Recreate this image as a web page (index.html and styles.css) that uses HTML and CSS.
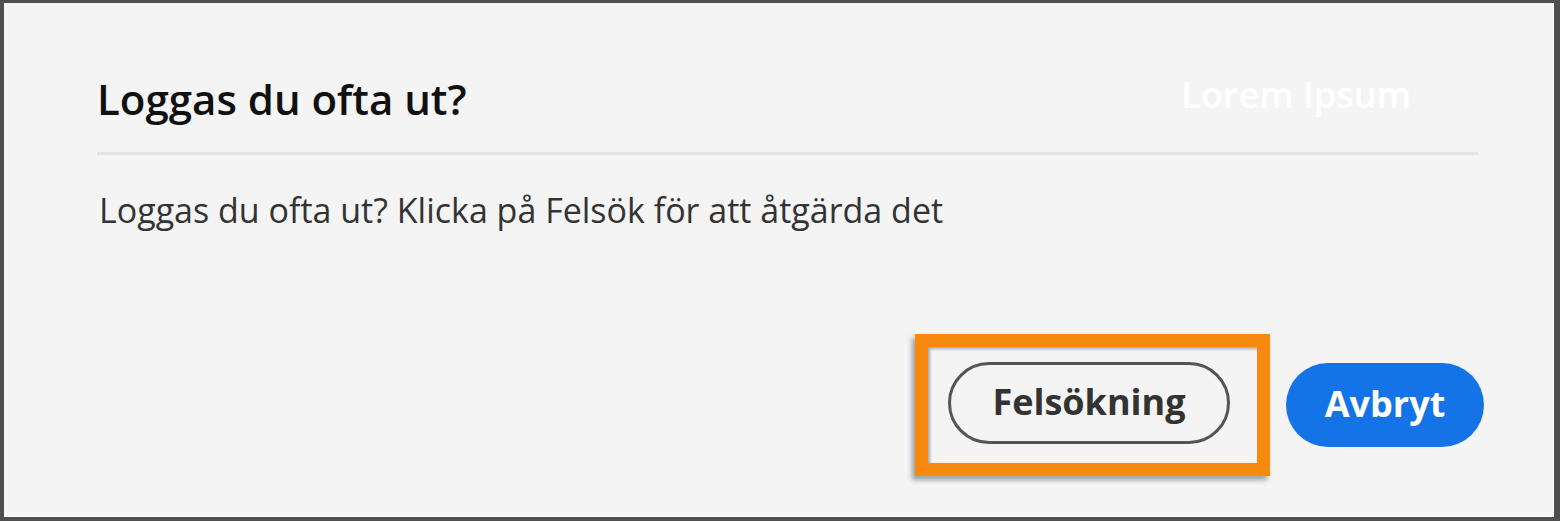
FILE: index.html
```html
<!DOCTYPE html>
<html lang="sv">
<head>
<meta charset="utf-8">
<title>Loggas du ofta ut?</title>
<link rel="stylesheet" href="styles.css">
</head>
<body>
<div class="frame">
  <header class="head">
    <h1 class="title">Loggas du ofta ut?</h1>
    <span class="ghost">Lorem Ipsum</span>
  </header>
  <div class="divider"></div>
  <p class="body-text">Loggas du ofta ut? Klicka på Felsök för att åtgärda det</p>
  <footer class="foot">
    <div class="highlight">
      <button class="btn btn-secondary">Felsökning</button>
    </div>
    <button class="btn btn-primary">Avbryt</button>
  </footer>
</div>
</body>
</html>
```
FILE: styles.css
```css
* { box-sizing: border-box; }
html, body { margin: 0; padding: 0; }
body {
  width: 1560px;
  height: 521px;
  font-family: "Open Sans", "Noto Sans", sans-serif;
  background: #4d4d4d;
}
.frame {
  width: 1560px;
  height: 521px;
  background: #f4f4f4;
  border-style: solid;
  border-color: #4f4f4f;
  border-width: 3px 6px 4px 4px;
  box-shadow: inset -1px -1px 0 #ffffff;
  display: flex;
  flex-direction: column;
  padding: 71px 70px 41px 93px;
}
.head {
  display: flex;
  justify-content: space-between;
  align-items: flex-start;
  padding-right: 73px;
}
.title {
  margin: 0;
  font-size: 42px;
  line-height: 50px;
  font-weight: 600;
  color: #111;
}
.ghost {
  font-size: 36px;
  line-height: 42px;
  font-weight: 600;
  color: #ffffff;
}
.divider {
  height: 3px;
  background: #e4e4e4;
  margin: 28px 6px 0 0;
}
.body-text {
  margin: 34px 0 0 2px;
  font-size: 34px;
  line-height: 42px;
  color: #333;
}
.foot {
  margin-top: auto;
  display: flex;
  justify-content: flex-end;
  align-items: center;
  gap: 16px;
}
.highlight {
  border: 13px solid #f58a0f;
  padding: 15px 27px 19px 20px;
  box-shadow: -3px 4px 5px rgba(40, 60, 80, 0.45), inset 2px 2px 3px rgba(40, 60, 80, 0.4);
}
.btn {
  font-family: inherit;
  font-weight: 700;
  font-size: 36px;
  border-radius: 42px;
  cursor: pointer;
  display: flex;
  align-items: center;
  justify-content: center;
  padding: 0 0 4px;
}
.btn-secondary {
  width: 282px;
  height: 82px;
  background: #f4f4f4;
  border: 3px solid #555;
  color: #333;
}
.btn-primary {
  width: 198px;
  height: 84px;
  background: #1473e6;
  border: none;
  color: #fff;
}
```
